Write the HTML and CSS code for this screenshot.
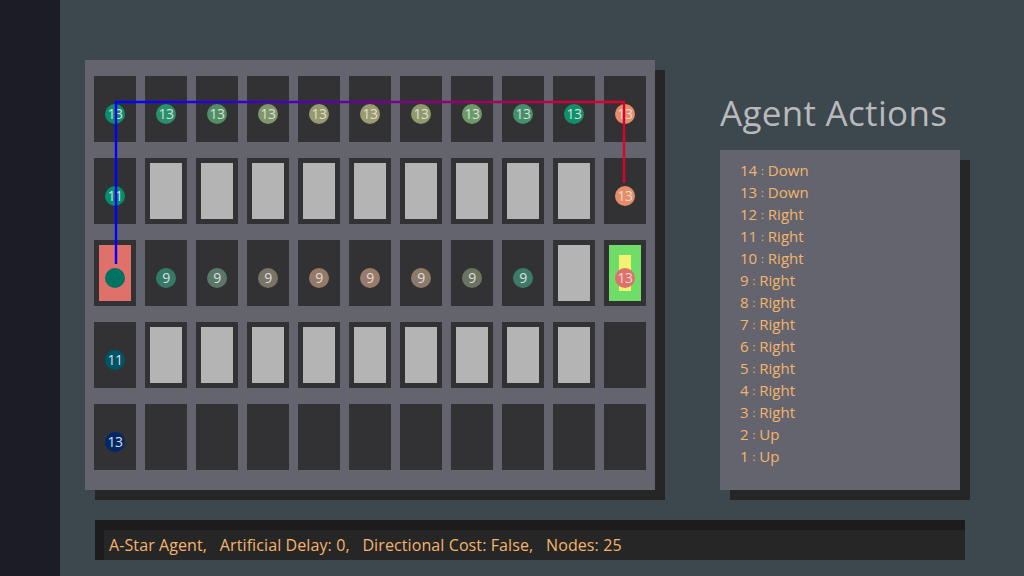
FILE: index.html
```html
<!DOCTYPE html>
<html>
<head>
<meta charset="utf-8">
<link rel="stylesheet" href="styles.css">
</head>
<body>
<div class="app">
  <aside class="sidebar"></aside>
  <main class="main">
    <div class="top">
      <div class="board">
        <div class="grid">
          <!-- row 0 -->
          <div class="cell"><span class="dot" style="background:#0b8f6b">13</span></div>
          <div class="cell"><span class="dot" style="background:#28906a">13</span></div>
          <div class="cell"><span class="dot" style="background:#519064">13</span></div>
          <div class="cell"><span class="dot" style="background:#7e9868">13</span></div>
          <div class="cell"><span class="dot" style="background:#989a6c">13</span></div>
          <div class="cell"><span class="dot" style="background:#9b9b6c">13</span></div>
          <div class="cell"><span class="dot" style="background:#8e9a68">13</span></div>
          <div class="cell"><span class="dot" style="background:#6c9a66">13</span></div>
          <div class="cell"><span class="dot" style="background:#44906a">13</span></div>
          <div class="cell"><span class="dot" style="background:#10906a">13</span></div>
          <div class="cell"><span class="dot" style="background:#e88c68">13</span></div>
          <!-- row 1 -->
          <div class="cell"><span class="dot" style="background:#00906a">11</span></div>
          <div class="cell wall"><div class="block"></div></div>
          <div class="cell wall"><div class="block"></div></div>
          <div class="cell wall"><div class="block"></div></div>
          <div class="cell wall"><div class="block"></div></div>
          <div class="cell wall"><div class="block"></div></div>
          <div class="cell wall"><div class="block"></div></div>
          <div class="cell wall"><div class="block"></div></div>
          <div class="cell wall"><div class="block"></div></div>
          <div class="cell wall"><div class="block"></div></div>
          <div class="cell"><span class="dot" style="background:#e88c68">13</span></div>
          <!-- row 2 -->
          <div class="cell boxed"><div class="start"><span class="dot" style="background:#007262"></span></div></div>
          <div class="cell"><span class="dot" style="background:#357a68">9</span></div>
          <div class="cell"><span class="dot" style="background:#5a7868">9</span></div>
          <div class="cell"><span class="dot" style="background:#7a7468">9</span></div>
          <div class="cell"><span class="dot" style="background:#967a68">9</span></div>
          <div class="cell"><span class="dot" style="background:#9a7a68">9</span></div>
          <div class="cell"><span class="dot" style="background:#8e7a68">9</span></div>
          <div class="cell"><span class="dot" style="background:#6a7460">9</span></div>
          <div class="cell"><span class="dot" style="background:#3e7a6a">9</span></div>
          <div class="cell wall"><div class="block"></div></div>
          <div class="cell boxed"><div class="goal"><div class="target"></div><span class="dot" style="background:#e2706a">13</span></div></div>
          <!-- row 3 -->
          <div class="cell"><span class="dot" style="background:#005468">11</span></div>
          <div class="cell wall"><div class="block"></div></div>
          <div class="cell wall"><div class="block"></div></div>
          <div class="cell wall"><div class="block"></div></div>
          <div class="cell wall"><div class="block"></div></div>
          <div class="cell wall"><div class="block"></div></div>
          <div class="cell wall"><div class="block"></div></div>
          <div class="cell wall"><div class="block"></div></div>
          <div class="cell wall"><div class="block"></div></div>
          <div class="cell wall"><div class="block"></div></div>
          <div class="cell"></div>
          <!-- row 4 -->
          <div class="cell"><span class="dot" style="background:#002868">13</span></div>
          <div class="cell"></div>
          <div class="cell"></div>
          <div class="cell"></div>
          <div class="cell"></div>
          <div class="cell"></div>
          <div class="cell"></div>
          <div class="cell"></div>
          <div class="cell"></div>
          <div class="cell"></div>
          <div class="cell"></div>
        </div>
        <svg class="path" width="570" height="430" viewBox="0 0 570 430">
          <defs>
            <linearGradient id="pg" gradientUnits="userSpaceOnUse" x1="31" y1="0" x2="539" y2="0">
              <stop offset="0" stop-color="#0000ff"/>
              <stop offset="1" stop-color="#e0002a"/>
            </linearGradient>
          </defs>
          <polyline points="31,204 31,42 539,42 539,123" fill="none" stroke="url(#pg)" stroke-width="2.4"/>
        </svg>
      </div>
      <div class="side">
        <h1 class="title">Agent Actions</h1>
        <ul class="actions">
          <li>14 <span class="sep">:</span> Down</li>
          <li>13 <span class="sep">:</span> Down</li>
          <li>12 <span class="sep">:</span> Right</li>
          <li>11 <span class="sep">:</span> Right</li>
          <li>10 <span class="sep">:</span> Right</li>
          <li>9 <span class="sep">:</span> Right</li>
          <li>8 <span class="sep">:</span> Right</li>
          <li>7 <span class="sep">:</span> Right</li>
          <li>6 <span class="sep">:</span> Right</li>
          <li>5 <span class="sep">:</span> Right</li>
          <li>4 <span class="sep">:</span> Right</li>
          <li>3 <span class="sep">:</span> Right</li>
          <li>2 <span class="sep">:</span> Up</li>
          <li>1 <span class="sep">:</span> Up</li>
        </ul>
      </div>
    </div>
    <div class="status">
      <div class="status-inner">A-Star Agent,&nbsp;&nbsp; Artificial Delay: 0,&nbsp;&nbsp; Directional Cost: False,&nbsp;&nbsp; Nodes: 25</div>
    </div>
  </main>
</div>
</body>
</html>
```
FILE: styles.css
```css
* { box-sizing: border-box; }
html, body { margin: 0; padding: 0; }
body {
  width: 1024px;
  height: 576px;
  overflow: hidden;
  background: #3c474e;
  font-family: "Open Sans", "Noto Sans", sans-serif;
}
.app {
  display: flex;
  height: 576px;
}
.sidebar {
  width: 60px;
  flex: none;
  background: #1c1c27;
}
.main {
  flex: 1;
  padding: 60px 0 0 25px;
}
.top {
  display: flex;
  align-items: flex-start;
}
.board {
  position: relative;
  width: 570px;
  height: 430px;
  background: #64646e;
  box-shadow: 10px 10px 0 #262626;
}
.grid {
  display: grid;
  grid-template-columns: repeat(11, 42px);
  grid-auto-rows: 66px;
  column-gap: 9px;
  row-gap: 16px;
  padding: 16px 9px 20px 9px;
}
.cell {
  background: #323234;
  display: flex;
  align-items: center;
  justify-content: center;
  padding-top: 10px;
}
.cell.wall, .cell.boxed {
  padding: 5px;
  align-items: stretch;
}
.block {
  flex: 1;
  background: #b4b4b4;
}
.dot {
  width: 20px;
  height: 20px;
  border-radius: 50%;
  display: flex;
  align-items: center;
  justify-content: center;
  color: #dedede;
  font-size: 14px;
  letter-spacing: -0.6px;
  line-height: 1;
}
.start {
  flex: 1;
  background: #e0706a;
  display: flex;
  align-items: center;
  justify-content: center;
  padding-top: 10px;
}
.goal {
  flex: 1;
  background: #6ede68;
  display: grid;
  place-items: center;
}
.goal > * { grid-area: 1 / 1; }
.target {
  width: 12px;
  height: 36px;
  background: #f4f272;
}
.goal .dot { margin-top: 10px; }
.path {
  position: absolute;
  left: 0;
  top: 0;
  pointer-events: none;
}
.side {
  margin-left: 65px;
  width: 240px;
}
.title {
  margin: 33px 0 0 0;
  font-weight: 400;
  font-size: 35px;
  line-height: 40px;
  height: 57px;
  color: #b9b9bb;
  letter-spacing: 0.3px;
}
.actions {
  list-style: none;
  margin: 0;
  padding: 9px 20px 23px 20px;
  background: #64646e;
  box-shadow: 10px 10px 0 #262626;
  height: 340px;
}
.actions li {
  color: #f5b46c;
  font-size: 15px;
  line-height: 22px;
  height: 22px;
}
.sep {
  font-size: 11px;
  line-height: 0;
  vertical-align: 1px;
}
.status {
  margin: 30px 0 0 10px;
  width: 870px;
  background: #1c1c1e;
  padding: 10px 0 0 9px;
}
.status-inner {
  background: #262626;
  height: 30px;
  padding-left: 5px;
  color: #f5b46c;
  font-size: 16px;
  line-height: 30px;
  letter-spacing: 0.1px;
}
```
